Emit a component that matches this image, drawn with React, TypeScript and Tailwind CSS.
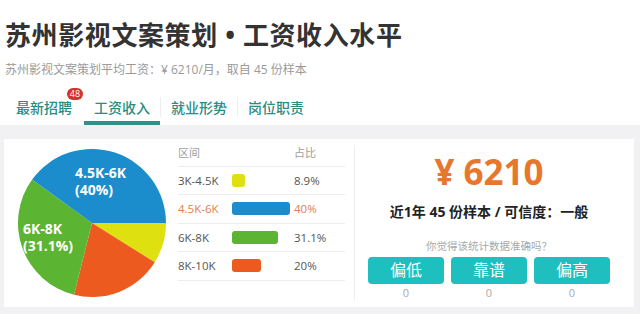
import React from "react";

const CJK = "font-['Open_Sans','Noto_Sans_CJK_SC',sans-serif]";

const slices = [
	{ pct: 8.9, color: "#dfe00f" },
	{ pct: 20, color: "#ec5a1f" },
	{ pct: 31.1, color: "#5bb432" },
	{ pct: 40, color: "#1b8dcd" },
];

const rows = [
	{ range: "3K-4.5K", pct: "8.9%", color: "bg-[#dfe00f]", w: "w-[13px]", hot: false },
	{ range: "4.5K-6K", pct: "40%", color: "bg-[#1b8dcd]", w: "w-[58px]", hot: true },
	{ range: "6K-8K", pct: "31.1%", color: "bg-[#5bb432]", w: "w-[46px]", hot: false },
	{ range: "8K-10K", pct: "20%", color: "bg-[#ec5a1f]", w: "w-[29px]", hot: false },
];

function Pie()
{
	const cx = 75, cy = 75, r = 74;
	let start = 0;
	const paths = slices.map((s, i) =>
	{
		const end = start + (s.pct / 100) * Math.PI * 2;
		const x1 = cx + r * Math.cos(start), y1 = cy + r * Math.sin(start);
		const x2 = cx + r * Math.cos(end), y2 = cy + r * Math.sin(end);
		const large = end - start > Math.PI ? 1 : 0;
		start = end;
		return <path key={i} d={`M${cx},${cy} L${x1},${y1} A${r},${r} 0 ${large} 1 ${x2},${y2} Z`} fill={s.color} />;
	});

	return (
		<svg width="150" height="150" viewBox="0 0 150 150" className="shrink-0">
			{paths}
			<g fill="#fff" fontFamily="'Open Sans', sans-serif" fontWeight="700" fontSize="14">
				<text x="58" y="30">4.5K-6K</text>
				<text x="58" y="47">(40%)</text>
				<text x="6" y="86">6K-8K</text>
				<text x="6" y="103">(31.1%)</text>
			</g>
		</svg>
	);
}

export default function App()
{
	return (
		<div className={`w-[640px] h-[314px] bg-white overflow-hidden flex flex-col ${CJK}`}>
			{/* Header */}
			<div className="pl-[5px] pt-[17px]">
				<h1 className="text-[26px] leading-[36px] font-bold text-[#333] tracking-[0.6px]">苏州影视文案策划 • 工资收入水平</h1>
				<p className="mt-[9px] text-[12px] leading-[16px] text-[#9a9a9a]">苏州影视文案策划平均工资：¥ 6210/月，取自 45 份样本</p>
			</div>

			{/* Tabs */}
			<div className="flex items-stretch h-[36px] mt-[11px] pl-[4px] text-[14px] font-medium text-[#2a8c82]">
				<div className="relative flex items-center px-[12px]">
					最新招聘
					<span className="absolute left-[63px] top-[-1px] h-[12px] min-w-[16px] px-[2px] rounded-full bg-[#d8312b] text-white text-[9px] leading-[12px] text-center font-normal">48</span>
				</div>
				<div className="relative flex items-center px-[10px] border-b-[4px] border-[#2a9488] pt-[4px]">
					工资收入
				</div>
				<div className="w-px my-[8px] bg-[#eee]" />
				<div className="flex items-center px-[10px]">就业形势</div>
				<div className="w-px my-[8px] bg-[#eee]" />
				<div className="flex items-center px-[10px]">岗位职责</div>
			</div>

			{/* Body */}
			<div className="flex-1 bg-[#f1f1f3] pt-[14px] pl-[4px] pr-[6px] pb-[7px] flex">
				<div className="flex-1 bg-white flex items-center">
					<div className="ml-[13px]">
						<Pie />
					</div>

					{/* Range table */}
					<div className="ml-[11px] w-[167px] self-start mt-[2px] text-[11.5px] text-[#555]">
						<div className="flex items-center h-[25.5px] border-b border-[#eee] text-[11px] text-[#a0a0a0]">
							<span className="w-[116px]">区间</span>
							<span>占比</span>
						</div>
						{rows.map(r => (
							<div key={r.range} className="flex items-center h-[28.5px] border-b border-[#eee]">
								<span className={`w-[54px] ${r.hot ? "text-[#e0804f]" : ""}`}>{r.range}</span>
								<span className="w-[62px] flex">
									<span className={`h-[13px] rounded-[3px] ${r.w} ${r.color}`} />
								</span>
								<span className={r.hot ? "text-[#e0804f]" : ""}>{r.pct}</span>
							</div>
						))}
					</div>

					<div className="ml-[9px] w-px self-stretch my-[6px] bg-[#eee]" />

					{/* Summary */}
					<div className="w-[268px] flex flex-col items-center self-stretch pt-[11px]">
						<div className="text-[35px] leading-[44px] font-bold text-[#e8772e] font-['Open_Sans',sans-serif]">¥ 6210</div>
						<div className="mt-[9px] text-[14px] leading-[18px] font-bold text-[#222]">近1年 45 份样本 / 可信度：一般</div>
						<div className="mt-[18px] text-[10.5px] leading-[14px] text-[#a8a8a8]">你觉得该统计数据准确吗？</div>
						<div className="mt-[4px] flex gap-[7px]">
							{["偏低", "靠谱", "偏高"].map(t => (
								<div key={t} className="flex flex-col items-center">
									<div className="w-[76px] h-[27px] rounded-[4px] bg-[#1fbfbf] text-white text-[16px] leading-[27px] text-center">{t}</div>
									<div className="mt-[2px] text-[11px] leading-[14px] text-[#aaa]">0</div>
								</div>
							))}
						</div>
					</div>
				</div>
			</div>
		</div>
	);
}
